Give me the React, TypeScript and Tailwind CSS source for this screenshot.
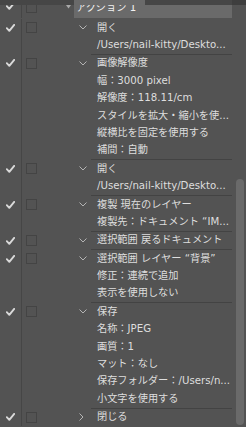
import React from "react";

type Row = { text: string; header?: boolean; chev?: "down" | "right"; end?: boolean };

const rows: Row[] = [
  { text: "開く", header: true, chev: "down" },
  { text: "/Users/nail-kitty/Deskto...", end: true },
  { text: "画像解像度", header: true, chev: "down" },
  { text: "幅：3000 pixel" },
  { text: "解像度：118.11/cm" },
  { text: "スタイルを拡大・縮小を使..." },
  { text: "縦横比を固定を使用する" },
  { text: "補間：自動", end: true },
  { text: "開く", header: true, chev: "down" },
  { text: "/Users/nail-kitty/Deskto...", end: true },
  { text: "複製 現在のレイヤー", header: true, chev: "down" },
  { text: "複製先：ドキュメント “IM...", end: true },
  { text: "選択範囲 戻るドキュメント", header: true, chev: "down", end: true },
  { text: "選択範囲 レイヤー “背景”", header: true, chev: "down" },
  { text: "修正：連続で追加" },
  { text: "表示を使用しない", end: true },
  { text: "保存", header: true, chev: "down" },
  { text: "名称：JPEG" },
  { text: "画質：1" },
  { text: "マット：なし" },
  { text: "保存フォルダー：/Users/n..." },
  { text: "小文字を使用する", end: true },
  { text: "閉じる", header: true, chev: "right" },
];

function Check() {
  return (
    <svg width="9" height="8" viewBox="0 0 9 8" className="block">
      <path d="M0.8 4.2 L3.3 6.8 L8.2 0.9" fill="none" stroke="#d9d9d9" strokeWidth="1.9" strokeLinecap="round" strokeLinejoin="round" />
    </svg>
  );
}

function ChevDown() {
  return (
    <svg width="8" height="5" viewBox="0 0 8 5" className="block">
      <path d="M0.5 0.5 L4 4 L7.5 0.5" fill="none" stroke="#b4b4b4" strokeWidth="1" />
    </svg>
  );
}

function ChevRight() {
  return (
    <svg width="5" height="8" viewBox="0 0 5 8" className="block">
      <path d="M0.5 0.5 L4 4 L0.5 7.5" fill="none" stroke="#b4b4b4" strokeWidth="1" />
    </svg>
  );
}

function ActionRow({ r }: { r: Row }) {
  return (
    <div className={`flex ${r.end ? "h-[18.4px]" : "h-[17.4px]"}`}>
      <div className="w-[22px] shrink-0 border-r border-[#464646] flex items-center justify-center">
        {r.header && <Check />}
      </div>
      <div className="w-[69px] shrink-0 flex items-center pl-[4px]">
        {r.header && <div className="w-[11px] h-[11px] border border-[#444444]" />}
        {r.chev === "down" && (
          <div className="ml-[42px]">
            <ChevDown />
          </div>
        )}
        {r.chev === "right" && (
          <div className="ml-[42px]">
            <ChevRight />
          </div>
        )}
      </div>
      <div
        className={`flex-1 min-w-0 flex items-center pl-[6px] whitespace-nowrap overflow-hidden text-[#dedede] ${
          r.end ? "border-b border-[#434343]" : ""
        }`}
      >
        {r.text}
      </div>
    </div>
  );
}

export default function App() {
  return (
    <div className="w-[246px] h-[427px] overflow-hidden bg-[#535353] flex flex-col font-['DejaVu_Sans','Noto_Sans_CJK_JP',sans-serif] text-[10.2px] leading-none">
      <div className="flex h-[5px] shrink-0">
        <div className="w-[74px] bg-[#464646]" />
        <div className="w-[71px] bg-[#6a6a6a]" />
        <div className="w-[87px] bg-[#464646]" />
        <div className="w-[14px] bg-[#3e3e3e]" />
      </div>
      <div className="flex flex-1 min-h-0">
        <div className="w-[232px] flex flex-col">
          <div className="flex h-[13px] shrink-0">
            <div className="w-[22px] shrink-0 border-r border-[#464646] overflow-hidden flex justify-center">
              <div className="-mt-[3px]">
                <Check />
              </div>
            </div>
            <div className="w-[52px] shrink-0 flex pl-[4px] overflow-hidden">
              <div className="w-[11px] h-[8px] border border-t-0 border-[#444444]" />
              <div className="ml-[29px] mt-[0px]">
                <svg width="5" height="4" viewBox="0 0 5 4" className="block">
                  <path d="M0 0 L5 0 L2.5 3.5 Z" fill="#a8a8a8" />
                </svg>
              </div>
            </div>
            <div className="w-[158px] bg-[#6a6a6a] overflow-hidden pl-[2px]">
              <div className="-mt-[3px] text-[#f2f2f2] whitespace-nowrap leading-[11px]">アクション 1</div>
            </div>
          </div>
          <div className="h-[1px] shrink-0" />
          {rows.map((r, i) => (
            <ActionRow key={i} r={r} />
          ))}
        </div>
        <div className="w-[14px] flex flex-col pt-[174px]">
          <div className="ml-[4px] w-[8px] h-[246px] rounded-full bg-[#6a6a6a]" />
        </div>
      </div>
    </div>
  );
}
